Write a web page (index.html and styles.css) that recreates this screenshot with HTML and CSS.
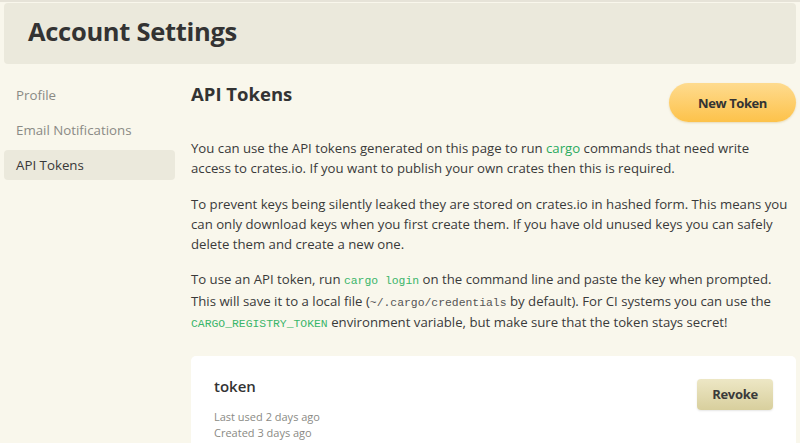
FILE: index.html
```html
<!DOCTYPE html>
<html>
<head>
<meta charset="utf-8">
<link rel="stylesheet" href="styles.css">
</head>
<body>
<div class="topline"></div>
<header class="header"><h1>Account Settings</h1></header>
<div class="layout">
  <nav class="sidebar">
    <a class="nav-item">Profile</a>
    <a class="nav-item">Email Notifications</a>
    <a class="nav-item active">API Tokens</a>
  </nav>
  <main class="main">
    <div class="title-row">
      <h2>API Tokens</h2>
      <button class="new-token">New Token</button>
    </div>
    <p class="p1">You can use the API tokens generated on this page to run <a class="link">cargo</a> commands that need write access to crates.io. If you want to publish your own crates then this is required.</p>
    <p class="p2">To prevent keys being silently leaked they are stored on crates.io in hashed form. This means you can only download keys when you first create them. If you have old unused keys you can safely delete them and create a new one.</p>
    <p class="p3">To use an API token, run <code class="green">cargo login</code> on the command line and paste the key when prompted. This will save it to a local file (<code>~/.cargo/credentials</code> by default). For CI systems you can use the <code class="green">CARGO_REGISTRY_TOKEN</code> environment variable, but make sure that the token stays secret!</p>
    <div class="card">
      <div class="card-info">
        <div class="token-name">token</div>
        <div class="meta">Last used 2 days ago</div>
        <div class="meta">Created 3 days ago</div>
      </div>
      <button class="revoke">Revoke</button>
    </div>
  </main>
</div>
</body>
</html>
```
FILE: styles.css
```css
* { box-sizing: border-box; }
html, body { margin: 0; padding: 0; }
body {
  background: #f9f7ec;
  font-family: "Open Sans", "Noto Sans", sans-serif;
  color: #383838;
  font-size: 13.2px;
  overflow: hidden;
  height: 443px;
}
.topline { height: 2px; background: #e6e3d8; }
.header {
  margin: 1px 4px 0 4px;
  height: 61px;
  background: #ebe9dc;
  border-radius: 4px;
  display: flex;
  align-items: center;
  padding-left: 24px;
  padding-bottom: 5px;
}
.header h1 {
  margin: 0;
  font-size: 25.5px;
  font-weight: 700;
  color: #333;
  letter-spacing: -0.3px;
}
.layout {
  display: flex;
  padding: 0 4px 0 4px;
  margin-top: 16px;
}
.sidebar {
  width: 171px;
  flex: none;
  display: flex;
  flex-direction: column;
}
.nav-item {
  display: block;
  height: 30px;
  line-height: 30px;
  padding-left: 12px;
  margin-bottom: 5px;
  color: #8a8a85;
  font-size: 13.3px;
  border-radius: 4px;
}
.nav-item.active {
  background: #ebe9dc;
  color: #383838;
}
.main {
  flex: 1;
  margin-left: 16px;
  min-width: 0;
}
.title-row {
  display: flex;
  justify-content: space-between;
  align-items: flex-start;
  height: 58px;
}
.title-row h2 {
  margin: 1px 0 0 0;
  font-size: 18.5px;
  line-height: 26px;
  font-weight: 700;
  color: #333;
}
.new-token {
  margin-top: 3px;
  width: 127px;
  height: 39px;
  border: none;
  border-radius: 20px;
  background: linear-gradient(#fedb8f, #fdc24a);
  box-shadow: 0 1px 2px rgba(180,140,40,0.25);
  font-family: inherit;
  font-size: 13px;
  letter-spacing: -0.4px;
  font-weight: 700;
  color: #333;
}
p {
  margin: 0;
  line-height: 20px;
  font-size: 13.2px;
  color: #3a3a3a;
}
.p1 { margin-bottom: 16px; max-width: 575px; }
.p2 { margin-bottom: 15px; }
.p3 { line-height: 21.5px; }
.link { color: #2aaa5e; }
code {
  font-family: "Liberation Mono", "DejaVu Sans Mono", monospace;
  font-size: 11.4px;
  line-height: 1;
  color: #555;
}
code.green { color: #3ab56a; }
.card {
  margin-top: 22px;
  background: #fff;
  border-radius: 5px;
  display: flex;
  justify-content: space-between;
  padding: 20px 23px 0 23px;
  height: 100px;
}
.token-name {
  font-size: 15px;
  font-weight: 600;
  color: #333;
  margin-bottom: 13px;
  line-height: 20px;
}
.meta {
  font-size: 11px;
  color: #8a8a85;
  line-height: 16px;
}
.revoke {
  margin-top: 3px;
  width: 76px;
  height: 31px;
  border: none;
  border-radius: 4px;
  background: linear-gradient(#ede7c5, #d8cf9d);
  box-shadow: 0 1px 2px rgba(0,0,0,0.1);
  font-family: inherit;
  font-size: 13px;
  letter-spacing: -0.3px;
  font-weight: 700;
  color: #3a3a3a;
}
```
